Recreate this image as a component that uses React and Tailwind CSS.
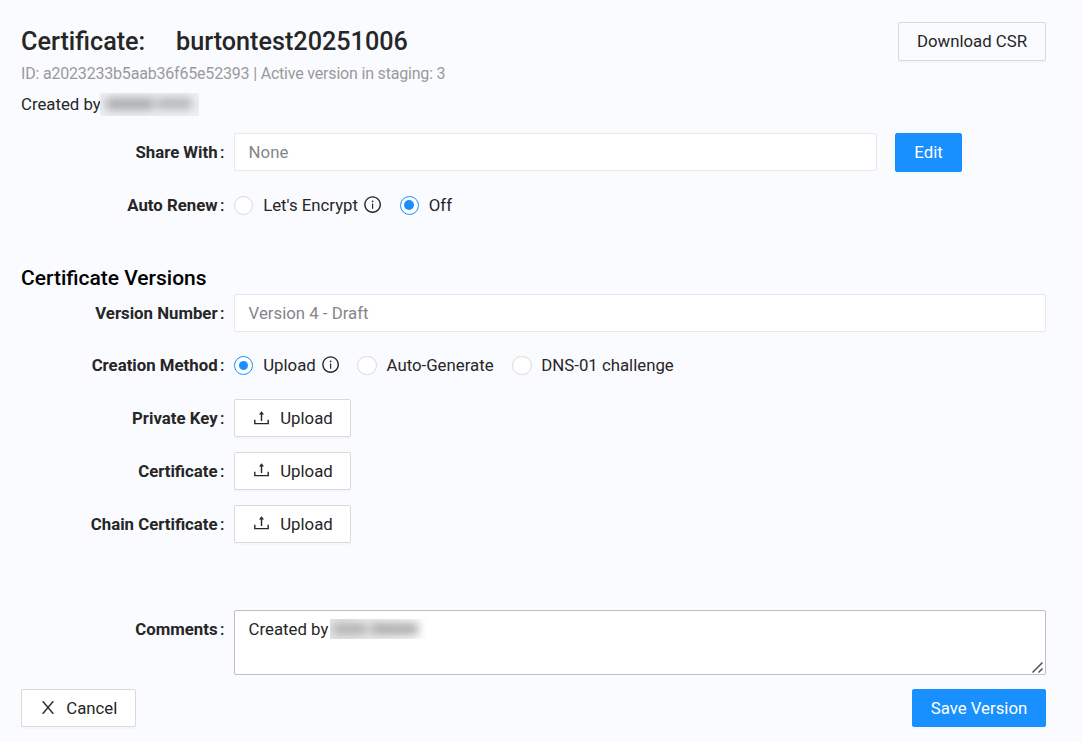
import React from "react";
import { AiOutlineInfoCircle } from "react-icons/ai";

function UploadIcon() {
  return (
    <svg className="mb-[1px] ml-[2px] mr-[11px] h-[14px] w-[15px] shrink-0" viewBox="0 0 15 14" fill="none" stroke="currentColor" strokeWidth="1.4">
      <path d="M0.8 8.8V12.6H14.2V8.8M7.5 2V10" />
      <path d="M7.5 0.2L10 3.4H5Z" fill="currentColor" stroke="none" />
    </svg>
  );
}

function CloseIcon() {
  return (
    <svg className="mb-[1px] ml-[2.6px] mr-[12px] h-[13px] w-[12px] shrink-0" viewBox="0 0 12 13" fill="none" stroke="currentColor" strokeWidth="1.35">
      <path d="M0.7 0.2L11.3 12.8M11.3 0.2L0.7 12.8" />
    </svg>
  );
}

function Row({ label, className = "", children }) {
  return (
    <div className={`flex items-start ${className}`}>
      <div className="flex h-[38.4px] w-[213px] shrink-0 items-center justify-end font-bold text-[#262626]">
        <span>{label}</span>
        <span className="ml-[2.4px] mr-[9.6px] font-medium">:</span>
      </div>
      {children}
    </div>
  );
}

function Radio({ checked, children, info }) {
  return (
    <label className="mr-[18.6px] flex h-[38.4px] items-center">
      <span
        className={`flex size-[19.4px] shrink-0 items-center justify-center rounded-full border bg-white ${
          checked ? "border-[#1890ff]" : "border-[#d9d9d9]"
        }`}
      >
        {checked && <span className="size-[9.6px] rounded-full bg-[#1890ff]" />}
      </span>
      <span className="ml-[9.8px]">{children}</span>
      {info && <AiOutlineInfoCircle className="-mr-[1.2px] mb-[1px] ml-[5px] size-[19.2px]" />}
    </label>
  );
}

function Button({ primary, className = "", children }) {
  return (
    <button
      className={`flex items-center justify-center rounded-[2px] border shadow-[0_2px_0_rgba(0,0,0,0.02)] ${
        primary ? "border-[#1890ff] bg-[#1890ff] text-white" : "border-[#d9d9d9]"
      } ${className}`}
    >
      {children}
    </button>
  );
}

function UploadButton() {
  return (
    <Button className="h-[38px] w-[117px] bg-white">
      <UploadIcon />
      <span>Upload</span>
    </Button>
  );
}

function DisabledInput({ className, children }) {
  return (
    <div
      className={`flex h-[38.4px] items-center rounded-[2px] border border-[#e8e8e8] bg-white pl-[13.6px] text-[#85858a] ${className}`}
    >
      {children}
    </div>
  );
}

export default function App() {
  return (
    <main className="flex h-[742px] w-[1083px] flex-col bg-[#fafbff] pl-[21px] pr-[37px] pt-[22px] font-[Roboto,'Liberation_Sans',sans-serif] text-[16.8px] leading-[26.4px] text-[#262626]">
      <header className="flex h-[111px] shrink-0 items-start justify-between">
        <div>
          <h1 className="flex h-[39px] items-center pt-[2px] text-[25.2px] font-medium">
            <span className="w-[155px]">Certificate:</span>
            <span>burtontest20251006</span>
          </h1>
          <p className="text-[16px] tracking-[-0.19px] text-[#999a9c]">ID: a2023233b5aab36f65e52393 | Active version in staging: 3</p>
          <div className="mt-[3px] flex h-[28px] items-center">
            <span className="w-[79px] whitespace-nowrap">Created by</span>
            <span className="flex h-[23px] w-[99px] items-center overflow-hidden bg-[#eff0f3]">
              <span className="ml-[6px] flex gap-[3px] blur-[5px]">
                <span className="h-[12px] w-[48px] bg-[#a9aaae]" />
                <span className="h-[11px] w-[35px] bg-[#b2b3b6]" />
              </span>
            </span>
          </div>
        </div>
        <Button className="h-[39px] w-[148px]">Download CSR</Button>
      </header>

      <Row label="Share With" className="h-[53px]">
        <DisabledInput className="w-[643px]">None</DisabledInput>
        <Button primary className="ml-[18px] h-[39px] w-[67px]">Edit</Button>
      </Row>
      <Row label="Auto Renew" className="h-[78px]">
        <Radio info>Let's Encrypt</Radio>
        <Radio checked>Off</Radio>
      </Row>

      <h2 className="h-[30px] text-[21px] font-medium leading-[28px] text-black">Certificate Versions</h2>
      <Row label="Version Number" className="h-[52.4px]">
        <DisabledInput className="w-[812px]">Version 4 - Draft</DisabledInput>
      </Row>
      <Row label="Creation Method" className="h-[52.8px]">
        <Radio checked info>Upload</Radio>
        <Radio>Auto-Generate</Radio>
        <Radio>DNS-01 challenge</Radio>
      </Row>
      <Row label="Private Key" className="h-[52.8px]">
        <UploadButton />
      </Row>
      <Row label="Certificate" className="h-[52.8px]">
        <UploadButton />
      </Row>
      <Row label="Chain Certificate" className="h-[105.2px]">
        <UploadButton />
      </Row>
      <Row label="Comments" className="h-[79px]">
        <div className="flex h-[65px] w-[812px] items-start rounded-[2px] border border-[#bfbfc3] bg-white pl-[13.6px] pt-[5px]">
          <span className="w-[81px] whitespace-nowrap">Created by</span>
          <span className="mt-[3px] flex h-[20px] w-[96px] items-center overflow-hidden bg-linear-to-r from-[#e6e6e6] via-[#f1f1f1] to-white">
            <span className="ml-[3px] flex gap-[4px] blur-[5px]">
              <span className="h-[12px] w-[34px] bg-[#b2b2b2]" />
              <span className="h-[12px] w-[47px] bg-[#acacac]" />
            </span>
          </span>
          <svg className="mb-[1px] mr-[2px] ml-auto size-[11px] self-end" viewBox="0 0 11 11" fill="none" stroke="#505050" strokeWidth="1.5">
            <path d="M0.5 10.5L10.5 0.5M6.5 10.5L10.5 6.5" />
          </svg>
        </div>
      </Row>

      <footer className="flex items-start justify-between">
        <Button className="h-[38px] w-[115px] bg-white">
          <CloseIcon />
          <span>Cancel</span>
        </Button>
        <Button primary className="h-[38px] w-[134px]">Save Version</Button>
      </footer>
    </main>
  );
}
